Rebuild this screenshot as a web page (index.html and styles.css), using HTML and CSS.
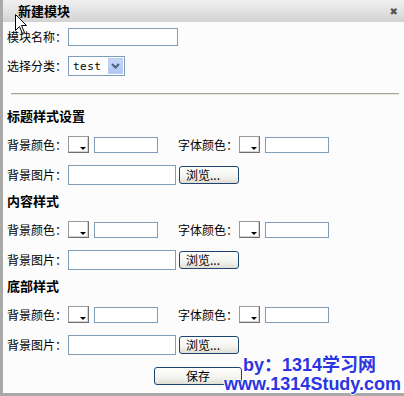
FILE: index.html
```html
<!DOCTYPE html>
<html lang="zh-CN">
<head>
    <meta charset="UTF-8">
    <title>新建模块</title>
    <link rel="stylesheet" href="styles.css">
</head>
<body>
<div class="dialog">
    <div class="titlebar">
        <span class="title">新建模块</span>
        <span class="close">✖</span>
    </div>
    <div class="content">
        <div class="row first">
            <label>模块名称：</label>
            <input type="text" class="text name">
        </div>
        <div class="row second">
            <label>选择分类：</label>
            <div class="select">
                <span class="select-text">test</span>
                <span class="select-arrow">
                    <svg width="9" height="6" viewBox="0 0 9 6"><path d="M1 1 L4.5 4.5 L8 1" fill="none" stroke="#4d6185" stroke-width="2"/></svg>
                </span>
            </div>
        </div>
        <div class="divider"></div>

        <!-- 标题 -->
        <div class="section top">
            <h3>标题样式设置</h3>
            <div class="row color-row">
                <label>背景颜色：</label>
                <span class="picker"><i></i></span>
                <input type="text" class="text color">
                <label class="second-label">字体颜色：</label>
                <span class="picker"><i></i></span>
                <input type="text" class="text color">
            </div>
            <div class="row image-row">
                <label>背景图片：</label>
                <input type="text" class="text file">
                <button class="btn browse">浏览...</button>
            </div>
        </div>

        <!-- 内容 -->
        <div class="section">
            <h3>内容样式</h3>
            <div class="row color-row">
                <label>背景颜色：</label>
                <span class="picker"><i></i></span>
                <input type="text" class="text color">
                <label class="second-label">字体颜色：</label>
                <span class="picker"><i></i></span>
                <input type="text" class="text color">
            </div>
            <div class="row image-row">
                <label>背景图片：</label>
                <input type="text" class="text file">
                <button class="btn browse">浏览...</button>
            </div>
        </div>

        <!-- 底部 -->
        <div class="section">
            <h3>底部样式</h3>
            <div class="row color-row">
                <label>背景颜色：</label>
                <span class="picker"><i></i></span>
                <input type="text" class="text color">
                <label class="second-label">字体颜色：</label>
                <span class="picker"><i></i></span>
                <input type="text" class="text color">
            </div>
            <div class="row image-row">
                <label>背景图片：</label>
                <input type="text" class="text file">
                <button class="btn browse">浏览...</button>
            </div>
        </div>

        <div class="row save-row">
            <button class="btn save">保存</button>
        </div>
    </div>

    <svg class="cursor" width="13" height="21" viewBox="0 0 13 21">
        <path d="M0.5 0.5 L0.5 16.5 L4.5 12.5 L7.5 19.5 L9.5 18.5 L6.5 11.5 L11.5 11.5 Z" fill="#fff" stroke="#000" stroke-width="1"/>
    </svg>

    <div class="watermark">
        <div class="wm-line1">by：1314学习网</div>
        <div class="wm-line2">www.1314Study.com</div>
    </div>
</div>
</body>
</html>
```

FILE: styles.css
```css
/* Global */
html, body {
    margin: 0;
    padding: 0;
    width: 404px;
    height: 396px;
    overflow: hidden;
    background-color: #a9a9a9;
}

.dialog {
    position: relative;
    margin-left: 3px;
    width: 401px;
    height: 393px;
    background-color: #fcfcfc;
    font-family: "Noto Sans CJK SC", "DejaVu Sans", sans-serif;
    font-size: 12px;
    color: #000;
}

.titlebar {
    height: 22px;
    display: flex;
    align-items: center;
    justify-content: space-between;
    background: linear-gradient(#f0f0f0, #e2e2e2 50%, #d2d2d2);
    padding: 0 6px 0 15px;
}

.title {
    font-size: 13px;
    font-weight: bold;
    line-height: 16px;
}

.close {
    font-size: 10px;
    color: #555;
    line-height: 10px;
}

.content {
    padding: 6px 0 0 4px;
}

.row {
    display: flex;
    align-items: center;
}

.row label {
    width: 61px;
    line-height: 14px;
    white-space: nowrap;
}

.row.first {
    height: 18px;
}

.row.second {
    height: 20px;
    margin-top: 10px;
}

.text {
    box-sizing: border-box;
    border: 1px solid #7f9db9;
    background: #fff;
    margin: 0;
    padding: 0 2px;
    font-size: 12px;
    outline: none;
}

.name {
    width: 110px;
    height: 18px;
}

/* fake select */
.select {
    box-sizing: border-box;
    width: 57px;
    height: 20px;
    border: 1px solid #7f9db9;
    background: #fff;
    display: flex;
    align-items: center;
    justify-content: space-between;
    padding: 0 1px 0 4px;
}

.select-text {
    font-family: "DejaVu Sans Mono", monospace;
    font-size: 11px;
    letter-spacing: 0.5px;
}

.select-arrow {
    width: 15px;
    height: 16px;
    background: linear-gradient(#c8d8fb, #b0c6f3);
    border: 1px solid #b9cbf1;
    box-sizing: border-box;
    display: flex;
    align-items: center;
    justify-content: center;
}

.divider {
    margin: 17px 5px 0 4px;
    height: 1px;
    background-color: #a2a2a0;
    border-bottom: 1px solid #ebe6d6;
}

.section {
    margin-top: 7px;
}

.section.top {
    margin-top: 13px;
}

.section h3 {
    margin: 8px 0 0;
    font-size: 13px;
    font-weight: bold;
    line-height: 16px;
    height: 16px;
}

.color-row {
    margin-top: 12px;
    height: 17px;
}

.picker {
    box-sizing: border-box;
    width: 21px;
    height: 17px;
    background: #fff;
    border: 1px solid #9a9a9a;
    border-right-color: #6e6e6e;
    border-bottom-color: #6e6e6e;
    box-shadow: inset -1px -1px 0 #d4d4d4;
    display: flex;
    align-items: flex-end;
    justify-content: flex-end;
    padding: 0 2px 2px 0;
}

.picker i {
    width: 0;
    height: 0;
    border-left: 3px solid transparent;
    border-right: 3px solid transparent;
    border-top: 3px solid #000;
}

.color {
    width: 64px;
    height: 16px;
    margin-left: 5px;
}

.row .second-label {
    margin-left: 20px;
}

.image-row {
    margin-top: 12px;
    height: 20px;
}

.file {
    width: 108px;
    height: 20px;
}

.btn {
    box-sizing: border-box;
    height: 18px;
    padding: 0;
    border: 1px solid #1c4470;
    border-radius: 3px;
    background: linear-gradient(#ffffff, #f3f3ee 60%, #e0ded4);
    font-family: "Noto Sans CJK SC", "DejaVu Sans", sans-serif;
    font-size: 12px;
    line-height: 14px;
    color: #000;
}

.browse {
    width: 60px;
    margin-left: 3px;
    text-align: left;
    padding-left: 6px;
}

.save-row {
    margin-top: 12px;
    padding-left: 147px;
}

.save {
    width: 88px;
}

.cursor {
    position: absolute;
    left: 12px;
    top: 14px;
}

/* watermark over the corner */
.watermark {
    position: absolute;
    left: 221px;
    top: 356px;
    font-family: "Liberation Sans", Arial, sans-serif;
    font-weight: bold;
    font-size: 18px;
    line-height: 19px;
    color: #2b35e2;
    text-shadow: 1px 0 0 #fff, -1px 0 0 #fff, 0 1px 0 #fff, 0 -1px 0 #fff;
    white-space: nowrap;
}

.wm-line1 {
    padding-left: 19px;
    font-family: "Liberation Sans", "Noto Sans CJK SC", sans-serif;
}
```
